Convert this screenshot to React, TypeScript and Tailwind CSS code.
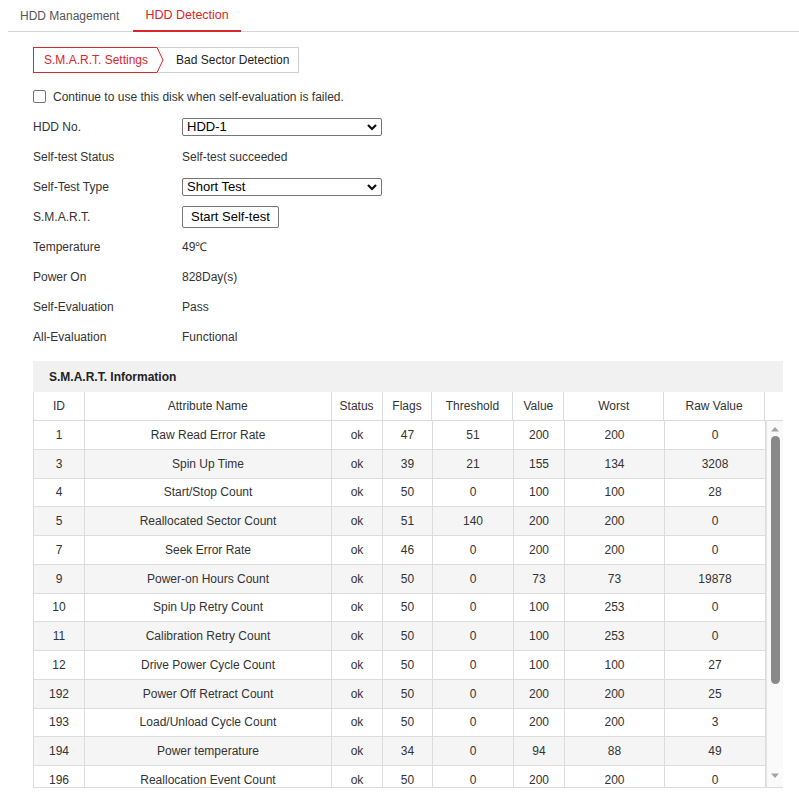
import * as React from "react";

const rows: [string, string, string, string, string, string, string, string][] = [
  ["1", "Raw Read Error Rate", "ok", "47", "51", "200", "200", "0"],
  ["3", "Spin Up Time", "ok", "39", "21", "155", "134", "3208"],
  ["4", "Start/Stop Count", "ok", "50", "0", "100", "100", "28"],
  ["5", "Reallocated Sector Count", "ok", "51", "140", "200", "200", "0"],
  ["7", "Seek Error Rate", "ok", "46", "0", "200", "200", "0"],
  ["9", "Power-on Hours Count", "ok", "50", "0", "73", "73", "19878"],
  ["10", "Spin Up Retry Count", "ok", "50", "0", "100", "253", "0"],
  ["11", "Calibration Retry Count", "ok", "50", "0", "100", "253", "0"],
  ["12", "Drive Power Cycle Count", "ok", "50", "0", "100", "100", "27"],
  ["192", "Power Off Retract Count", "ok", "50", "0", "200", "200", "25"],
  ["193", "Load/Unload Cycle Count", "ok", "50", "0", "200", "200", "3"],
  ["194", "Power temperature", "ok", "34", "0", "94", "88", "49"],
  ["196", "Reallocation Event Count", "ok", "50", "0", "200", "200", "0"],
];

const widths = ["w-[51px]", "w-[247px]", "w-[51px]", "w-[50px]", "w-[81px]", "w-[51px]", "w-[100px]", "w-[101px]"];
const headers = ["ID", "Attribute Name", "Status", "Flags", "Threshold", "Value", "Worst", "Raw Value"];

function Chevron() {
  return (
    <svg width="12" height="12" viewBox="0 0 12 12" className="shrink-0">
      <path d="M2 4 L6 8 L10 4" fill="none" stroke="#111" strokeWidth="2.2" />
    </svg>
  );
}

function FakeSelect({ value }: { value: string }) {
  return (
    <div className="flex h-[18px] w-[200px] items-center justify-between rounded-[2px] border border-[#767676] bg-white pl-[4px] pr-[3px] text-[13px] text-black">
      <span>{value}</span>
      <Chevron />
    </div>
  );
}

function Row({ label, children }: { label: string; children: React.ReactNode }) {
  return (
    <div className="flex h-[30px] items-center">
      <div className="w-[149px]">{label}</div>
      <div>{children}</div>
    </div>
  );
}

export default function App() {
  return (
    <div className="h-[800px] w-[799px] overflow-hidden bg-white text-[12px] text-[#333]" style={{ fontFamily: '"Liberation Sans", Arial, sans-serif' }}>
      {/* top tabs */}
      <div className="ml-[8px] flex h-[32px] items-end border-b border-[#d4d4d4]">
        <div className="flex h-[31px] items-center pl-[12px] pr-[14px] text-[#555]">HDD Management</div>
        <div className="-mb-px flex h-[31px] items-center border-b-2 border-[#d9262b] px-[12px] text-[12.5px] text-[#d9262b]">HDD Detection</div>
      </div>

      <div className="pl-[33px] pr-[16px]">
        {/* sub tabs */}
        <div className="mt-[15px] flex h-[26px]">
          <div className="flex items-center border-y border-l border-[#d9262b] pl-[10px] pr-[9px] text-[#d9262b]">S.M.A.R.T. Settings</div>
          <svg width="7" height="26" viewBox="0 0 7 26" className="shrink-0">
            <path d="M0 0.5 H7" stroke="#cfcfcf" strokeWidth="1" />
            <path d="M0 25.5 H7" stroke="#cfcfcf" strokeWidth="1" />
            <path d="M0 0.5 L6 13 L0 25.5" fill="none" stroke="#d9262b" strokeWidth="1" />
          </svg>
          <div className="flex items-center border-y border-r border-[#cfcfcf] pl-[12px] pr-[9px] text-[#222]">Bad Sector Detection</div>
        </div>

        {/* form */}
        <div className="mt-[16px] flex h-[15px] items-center">
          <span className="h-[13px] w-[13px] rounded-[2px] border border-[#767676] bg-white" />
          <span className="ml-[7px]">Continue to use this disk when self-evaluation is failed.</span>
        </div>
        <div className="mt-[8px]">
          <Row label="HDD No.">
            <FakeSelect value="HDD-1" />
          </Row>
          <Row label="Self-test Status">Self-test succeeded</Row>
          <Row label="Self-Test Type">
            <FakeSelect value="Short Test" />
          </Row>
          <Row label="S.M.A.R.T.">
            <button type="button" className="flex h-[22px] items-center rounded-[2px] border border-[#767676] bg-white px-[8px] text-[13px] text-black">
              Start Self-test
            </button>
          </Row>
          <Row label="Temperature">49℃</Row>
          <Row label="Power On">828Day(s)</Row>
          <Row label="Self-Evaluation">Pass</Row>
          <Row label="All-Evaluation">Functional</Row>
        </div>

        {/* table */}
        <div className="mt-[9px] w-[750px]">
          <div className="flex h-[31px] items-center bg-[#f1f1f1] pl-[16px] font-bold text-[#222]">S.M.A.R.T. Information</div>
          <div className="flex h-[29px] border-l border-[#dcdcdc]">
            {headers.map((h, i) => (
              <div key={h} className={`${widths[i]} flex items-center justify-center border-r border-b border-[#dcdcdc]`}>
                {h}
              </div>
            ))}
            <div className="w-[18px] border-b border-[#dcdcdc]" />
          </div>
          <div className="flex h-[367px] overflow-hidden border-b border-l border-[#dcdcdc]">
            <div className="w-[732px]">
              {rows.map((r, ri) => (
                <div key={r[0]} className={`flex h-[28.75px] ${ri % 2 === 1 ? "bg-[#f5f5f5]" : "bg-white"}`}>
                  {r.map((c, ci) => (
                    <div key={ci} className={`${widths[ci]} flex shrink-0 items-center justify-center border-r border-b border-[#dcdcdc]`}>
                      {c}
                    </div>
                  ))}
                </div>
              ))}
            </div>
            <div className="flex w-[18px] flex-col items-center border-l border-[#e4e4e4] bg-[#fafafa] pt-[5px]">
              <svg width="10" height="6" viewBox="0 0 10 6">
                <path d="M1 5.5 L5 1 L9 5.5 Z" fill="#a3a3a3" />
              </svg>
              <div className="mt-[4px] h-[248px] w-[9px] rounded-full bg-[#8a8a8a]" />
              <svg width="10" height="6" viewBox="0 0 10 6" className="mt-[89px]">
                <path d="M1 0.5 L5 5 L9 0.5 Z" fill="#a3a3a3" />
              </svg>
            </div>
          </div>
        </div>
      </div>
    </div>
  );
}
